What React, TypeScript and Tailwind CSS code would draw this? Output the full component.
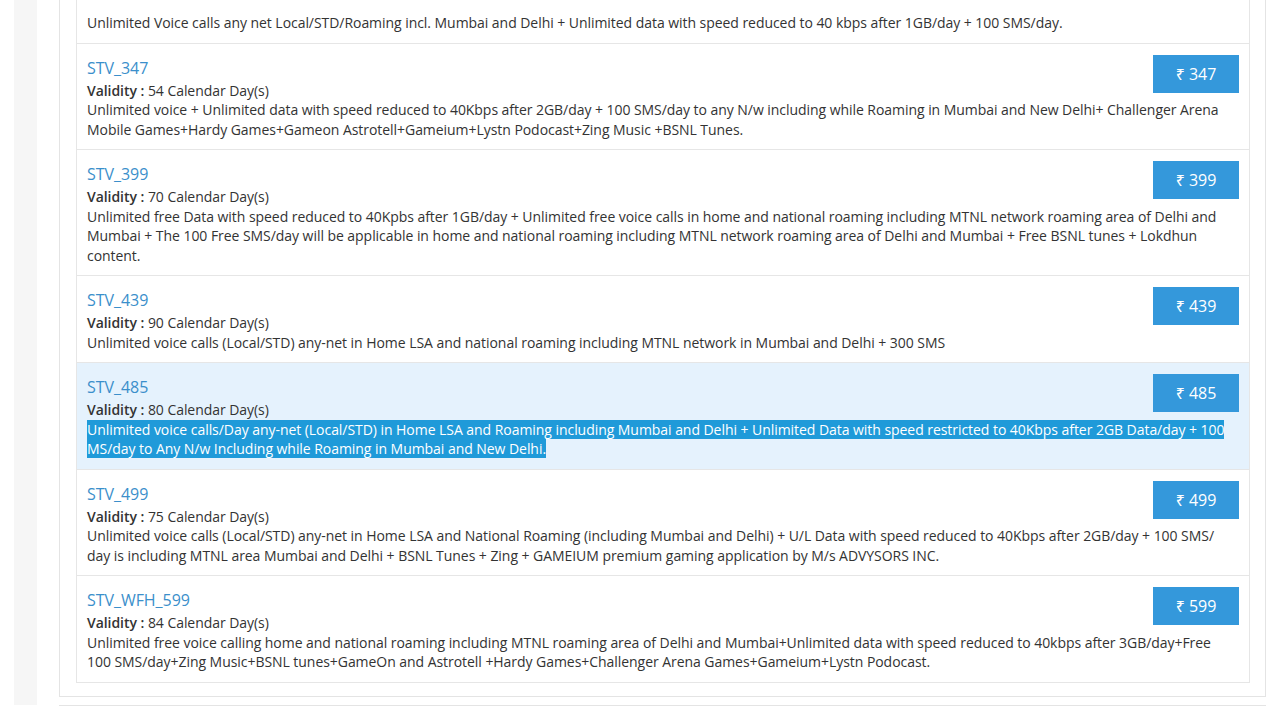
const FONT = { fontFamily: '"Open Sans", "Noto Sans", sans-serif' };

type Plan = {
  name: string;
  validity: number;
  price: number;
  desc: string;
  active?: boolean;
};

const PLANS: Plan[] = [
  {
    name: "STV_347",
    validity: 54,
    price: 347,
    desc: "Unlimited voice + Unlimited data with speed reduced to 40Kbps after 2GB/day + 100 SMS/day to any N/w including while Roaming in Mumbai and New Delhi+ Challenger Arena Mobile Games+Hardy Games+Gameon Astrotell+Gameium+Lystn Podocast+Zing Music +BSNL Tunes.",
  },
  {
    name: "STV_399",
    validity: 70,
    price: 399,
    desc: "Unlimited free Data with speed reduced to 40Kpbs after 1GB/day + Unlimited free voice calls in home and national roaming including MTNL network roaming area of Delhi and Mumbai + The 100 Free SMS/day will be applicable in home and national roaming including MTNL network roaming area of Delhi and Mumbai + Free BSNL tunes + Lokdhun content.",
  },
  {
    name: "STV_439",
    validity: 90,
    price: 439,
    desc: "Unlimited voice calls (Local/STD) any-net in Home LSA and national roaming including MTNL network in Mumbai and Delhi + 300 SMS",
  },
  {
    name: "STV_485",
    validity: 80,
    price: 485,
    active: true,
    desc: "Unlimited voice calls/Day any-net (Local/STD) in Home LSA and Roaming including Mumbai and Delhi + Unlimited Data with speed restricted to 40Kbps after 2GB Data/day + 100 MS/day to Any N/w Including while Roaming in Mumbai and New Delhi.",
  },
  {
    name: "STV_499",
    validity: 75,
    price: 499,
    desc: "Unlimited voice calls (Local/STD) any-net in Home LSA and National Roaming (including Mumbai and Delhi) + U/L Data with speed reduced to 40Kbps after 2GB/day + 100 SMS/ day is including MTNL area Mumbai and Delhi + BSNL Tunes + Zing + GAMEIUM premium gaming application by M/s ADVYSORS INC.",
  },
  {
    name: "STV_WFH_599",
    validity: 84,
    price: 599,
    desc: "Unlimited free voice calling home and national roaming including MTNL roaming area of Delhi and Mumbai+Unlimited data with speed reduced to 40kbps after 3GB/day+Free 100 SMS/day+Zing Music+BSNL tunes+GameOn and Astrotell +Hardy Games+Challenger Arena Games+Gameium+Lystn Podocast.",
  },
];

export default function App() {
  return (
    <div className="h-[720px] w-[1280px] overflow-hidden bg-white text-[14px] tracking-[-0.05px] text-[#333]" style={FONT}>
      <div className="flex h-[705px] pl-[14px] pr-[14px]">
        <div className="w-[23px] shrink-0 bg-[#f6f6f6]" />
        <div className="ml-[22px] flex-1 self-start border-b border-l border-r border-[#e4e4e4] pb-[13px] pl-4 pr-[15px]">
          <div className="border-b border-l border-r border-[#e6e6e6]">
            <div className="px-[10px] pb-[10px] pt-[13px] leading-[19.5px]">
              Unlimited Voice calls any net Local/STD/Roaming incl. Mumbai and Delhi + Unlimited data with speed reduced to 40 kbps
              after 1GB/day + 100 SMS/day.
            </div>
            {PLANS.map((p) => (
              <PlanRow key={p.name} plan={p} />
            ))}
          </div>
        </div>
      </div>
      <div className="ml-[59px] mr-[14px] border-t border-[#e4e4e4]" />
    </div>
  );
}

function PlanRow({ plan }: { plan: Plan }) {
  return (
    <div className={`border-t border-[#e6e6e6] px-[10px] pb-[10px] pt-[11px] ${plan.active ? "bg-[#e5f2fd]" : ""}`}>
      <button className="float-right flex h-[38px] w-[86px] items-center justify-center bg-[#3498db] text-[16px] text-white">
        ₹ {plan.price}
      </button>
      <div className="text-[16px] leading-[26px] text-[#3b8fcb]">{plan.name}</div>
      <div className="leading-[19.5px]">
        <span className="font-semibold">Validity :</span> {plan.validity} Calendar Day(s)
      </div>
      <div className="pr-[4px] leading-[19.5px]">
        {plan.active ? <span className="bg-[#1f9ad9] text-white">{plan.desc}</span> : plan.desc}
      </div>
    </div>
  );
}
